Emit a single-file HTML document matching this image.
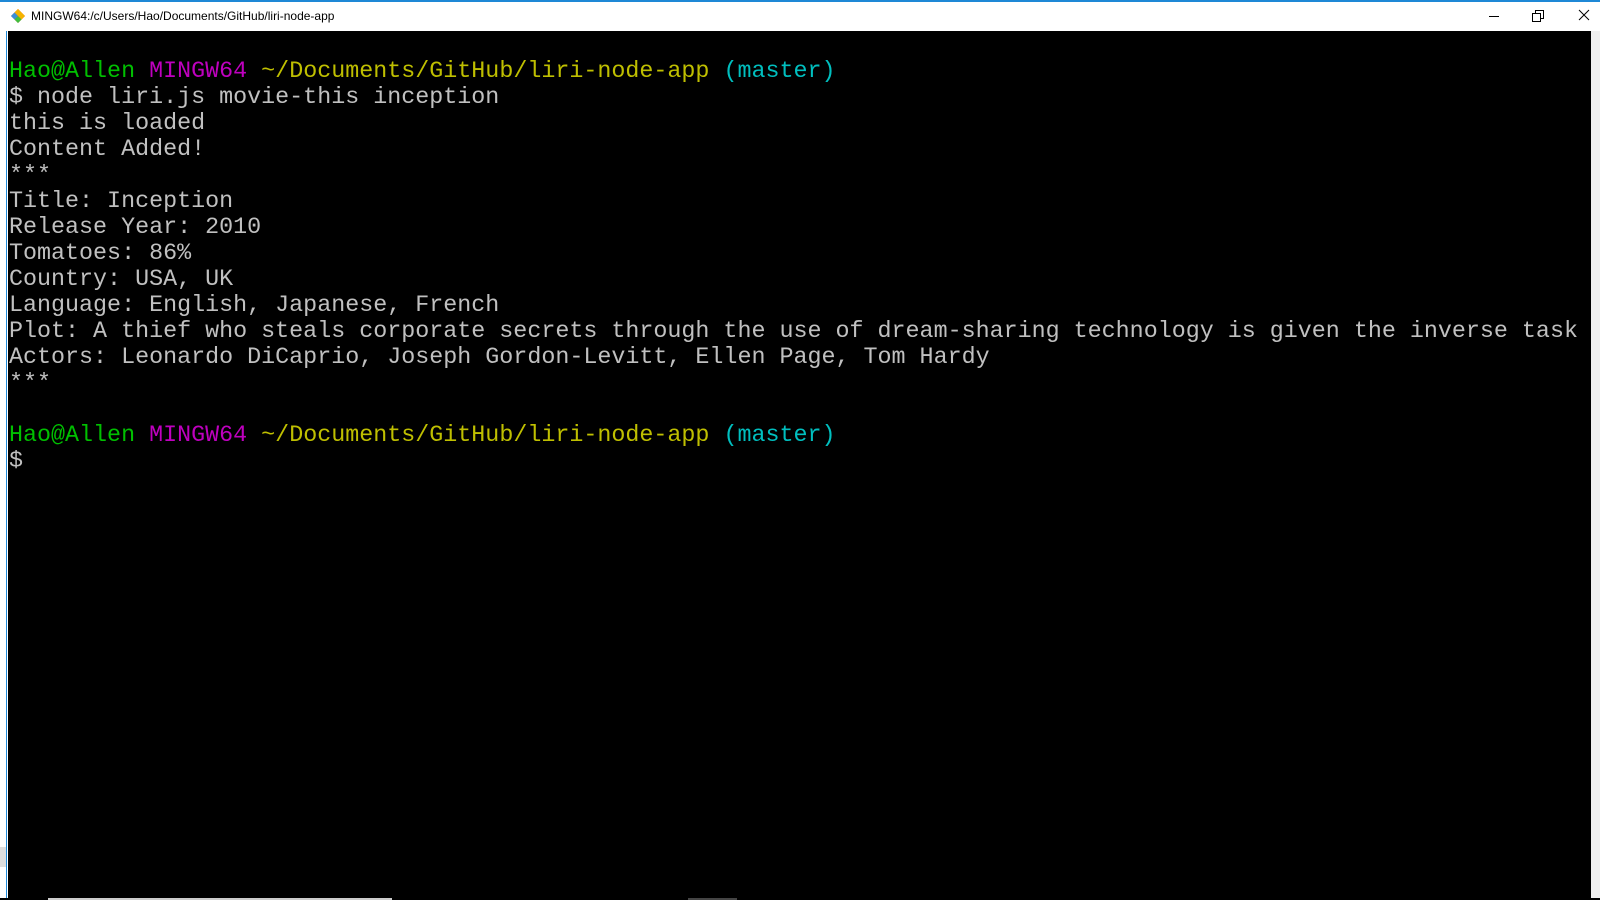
<!DOCTYPE html>
<html><head><meta charset="utf-8"><style>
html,body{margin:0;padding:0;width:1600px;height:900px;overflow:hidden;background:#fff;}
#title{position:absolute;left:0;top:0;width:1600px;height:31px;background:#fff;border-top:2px solid #1e88d6;box-sizing:border-box;font-family:"Liberation Sans",sans-serif;font-size:12px;color:#000;}
#title .t{position:absolute;left:31px;top:7px;}
#term{position:absolute;left:8px;top:31px;width:1583px;height:867px;background:#000;}
#left{position:absolute;left:0;top:31px;width:7px;height:869px;background:#fff;border-right:1px solid #1e88d6;box-sizing:border-box;}
#sb{position:absolute;left:1591px;top:31px;width:9px;height:867px;background:#f0f0f0;}
#bot{position:absolute;left:0;top:898px;width:1600px;height:2px;background:#000;}
pre{margin:0;position:absolute;left:9px;top:33px;font-family:"Liberation Mono",monospace;font-size:23.35px;line-height:26px;color:#c0c0c0;white-space:pre;}
.g{color:#00bf00}.m{color:#bf00bf}.y{color:#bfbf00}.c{color:#00bfbf}
</style></head><body>
<div id="title">
<svg style="position:absolute;left:10px;top:6px" width="16" height="16" viewBox="0 0 16 16"><path d="M8 1L15 8L8 15L1 8Z" fill="#f05033"/><path d="M8 1L15 8L11.5 11.5L4.5 4.5Z" fill="#f5b400"/><path d="M1 8L4.5 4.5L8 8L4.5 11.5Z" fill="#3a8fd8"/><path d="M4.5 11.5L8 8L11.5 11.5L8 15Z" fill="#3fbf3f"/></svg>
<span class="t">MINGW64:/c/Users/Hao/Documents/GitHub/liri-node-app</span>
<svg style="position:absolute;left:1488px;top:8px" width="12" height="12"><path d="M1 6.5H11" stroke="#000"/></svg>
<svg style="position:absolute;left:1532px;top:8px" width="12" height="12"><path d="M0.5 3.5H8.5V11.5H0.5Z M3.5 3.5V0.5H11.5V8.5H8.5" stroke="#000" fill="none"/></svg>
<svg style="position:absolute;left:1578px;top:7px" width="12" height="12"><path d="M1 1L11 11M11 1L1 11" stroke="#000"/></svg>
</div>
<div id="left"><div style="position:absolute;left:0;top:816px;width:6px;height:20px;background:#ddd"></div></div>
<div id="term"></div>
<div id="sb"></div>
<div id="bot"><div style="position:absolute;left:48px;top:0;width:344px;height:2px;background:#ccc"></div><div style="position:absolute;left:688px;top:0;width:49px;height:2px;background:#444"></div></div>
<pre>

<span class="g">Hao@Allen</span> <span class="m">MINGW64</span> <span class="y">~/Documents/GitHub/liri-node-app</span> <span class="c">(master)</span>
$ node liri.js movie-this inception
this is loaded
Content Added!
***
Title: Inception
Release Year: 2010
Tomatoes: 86%
Country: USA, UK
Language: English, Japanese, French
Plot: A thief who steals corporate secrets through the use of dream-sharing technology is given the inverse task
Actors: Leonardo DiCaprio, Joseph Gordon-Levitt, Ellen Page, Tom Hardy
***

<span class="g">Hao@Allen</span> <span class="m">MINGW64</span> <span class="y">~/Documents/GitHub/liri-node-app</span> <span class="c">(master)</span>
$
</pre>
</body></html>
